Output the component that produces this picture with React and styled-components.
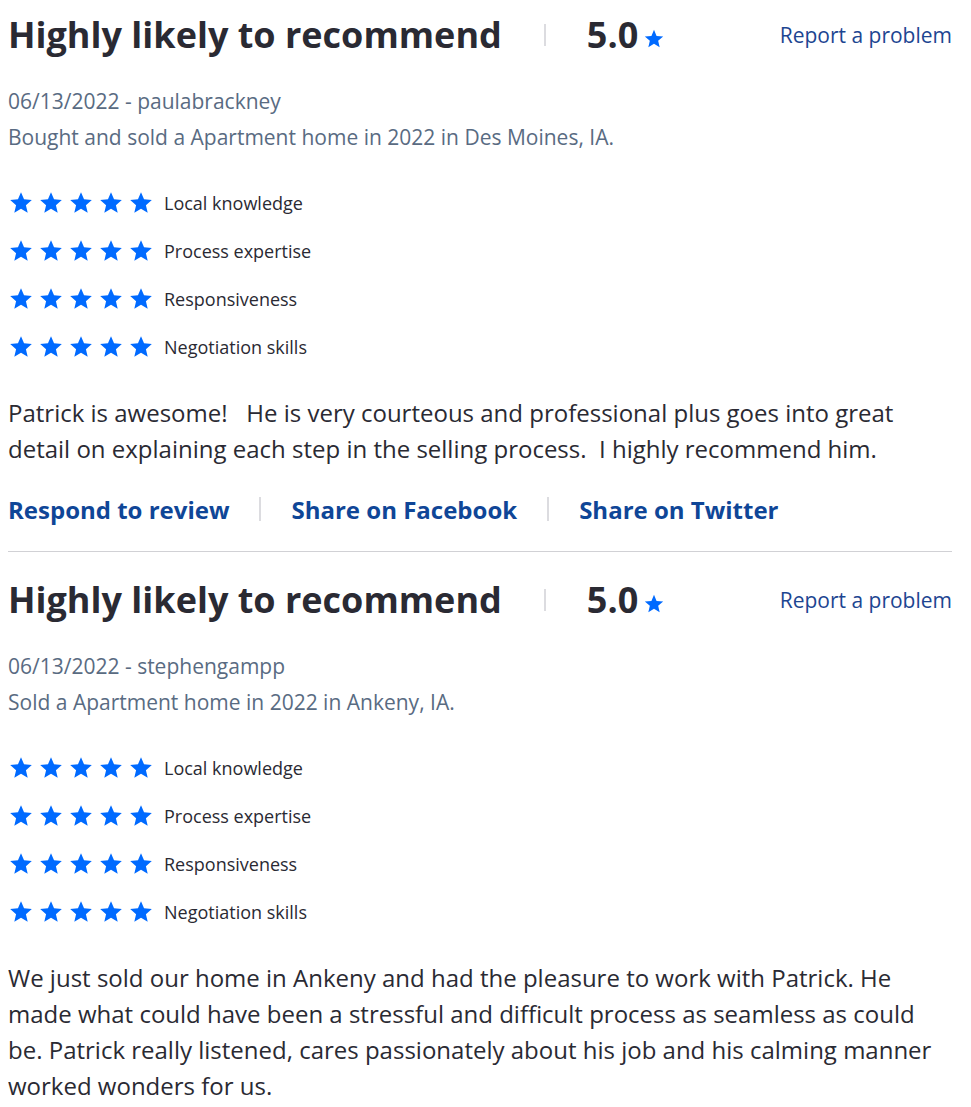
import React from "react";
import styled, { createGlobalStyle } from "styled-components";

const Global = createGlobalStyle`
  body {
    margin: 8px;
    font-family: "Open Sans", "Noto Sans", sans-serif;
    color: #2a2a33;
    background: #fff;
  }
`;

const List = styled.div`
  width: 944px;
`;

const Review = styled.section`
  padding: ${(p) => (p.$first ? "0" : "21px")} 0 24px;
  border-bottom: ${(p) => (p.$last ? "none" : "1px solid #d1d1d5")};
`;

const Header = styled.div`
  display: flex;
  align-items: center;
  height: 54px;
`;

const Title = styled.h2`
  margin: 0;
  font-size: 36px;
  line-height: 54px;
  font-weight: 700;
  color: #2a2a33;
`;

const HeadSep = styled.span`
  width: 2px;
  height: 22px;
  background: #dcdce0;
  margin: 0 41px 0 42px;
`;

const Score = styled.div`
  display: flex;
  align-items: baseline;
  gap: 5px;
  font-size: 36px;
  font-weight: 700;
  line-height: 54px;
  svg {
    align-self: flex-end;
    margin-bottom: 12px;
  }
`;

const Report = styled.a`
  margin-left: auto;
  font-size: 21px;
  line-height: 30px;
  color: #1d4591;
  text-decoration: none;
  cursor: pointer;
`;

const Meta = styled.div`
  margin-top: 21px;
  font-size: 21px;
  line-height: 36px;
  color: #596b82;
`;

const Ratings = styled.div`
  margin-top: 24px;
  display: flex;
  flex-direction: column;
`;

const RatingRow = styled.div`
  display: flex;
  align-items: center;
  height: 48px;
`;

const Stars = styled.div`
  display: flex;
  gap: 4px;
  margin-right: 10px;
`;

const RatingLabel = styled.span`
  font-size: 18px;
  color: #2a2a33;
`;

const Body = styled.p`
  margin: 24px 0 0;
  font-size: 24px;
  line-height: 36px;
  color: #2a2a33;
  white-space: pre-wrap;
`;

const Actions = styled.div`
  margin-top: 24px;
  display: flex;
  align-items: center;
  height: 36px;
`;

const ActionLink = styled.a`
  font-size: 24px;
  font-weight: 700;
  color: #0f4697;
  text-decoration: none;
  cursor: pointer;
`;

const ActionSep = styled.span`
  width: 2px;
  height: 24px;
  background: #dcdce0;
  margin: 0 30px;
`;

const Star = ({ size = 26 }) => (
  <svg width={size} height={size} viewBox="0 0 24 24" aria-hidden="true">
    <path
      fill="#006aff"
      d="M12 17.27L18.18 21l-1.64-7.03L22 9.24l-7.19-.61L12 2 9.19 8.63 2 9.24l5.46 4.73L5.82 21z"
    />
  </svg>
);

const categories = [
  "Local knowledge",
  "Process expertise",
  "Responsiveness",
  "Negotiation skills",
];

const reviews = [
  {
    meta: "06/13/2022 - paulabrackney",
    deal: "Bought and sold a Apartment home in 2022 in Des Moines, IA.",
    text:
      "Patrick is awesome!   He is very courteous and professional plus goes into great detail on explaining each step in the selling process.  I highly recommend him.",
    actions: true,
  },
  {
    meta: "06/13/2022 - stephengampp",
    deal: "Sold a Apartment home in 2022 in Ankeny, IA.",
    text:
      "We just sold our home in Ankeny and had the pleasure to work with Patrick. He made what could have been a stressful and difficult process as seamless as could be. Patrick really listened, cares passionately about his job and his calming manner worked wonders for us.",
    actions: false,
  },
];

export default function App() {
  return (
    <>
      <Global />
      <List>
        {reviews.map((r, i) => (
          <Review key={i} $first={i === 0} $last={i === reviews.length - 1}>
            <Header>
              <Title>Highly likely to recommend</Title>
              <HeadSep />
              <Score>
                5.0
                <Star size={22} />
              </Score>
              <Report>Report a problem</Report>
            </Header>
            <Meta>
              <div>{r.meta}</div>
              <div>{r.deal}</div>
            </Meta>
            <Ratings>
              {categories.map((c) => (
                <RatingRow key={c}>
                  <Stars>
                    {[0, 1, 2, 3, 4].map((k) => (
                      <Star key={k} />
                    ))}
                  </Stars>
                  <RatingLabel>{c}</RatingLabel>
                </RatingRow>
              ))}
            </Ratings>
            <Body>{r.text}</Body>
            {r.actions && (
              <Actions>
                <ActionLink>Respond to review</ActionLink>
                <ActionSep />
                <ActionLink>Share on Facebook</ActionLink>
                <ActionSep />
                <ActionLink>Share on Twitter</ActionLink>
              </Actions>
            )}
          </Review>
        ))}
      </List>
    </>
  );
}
